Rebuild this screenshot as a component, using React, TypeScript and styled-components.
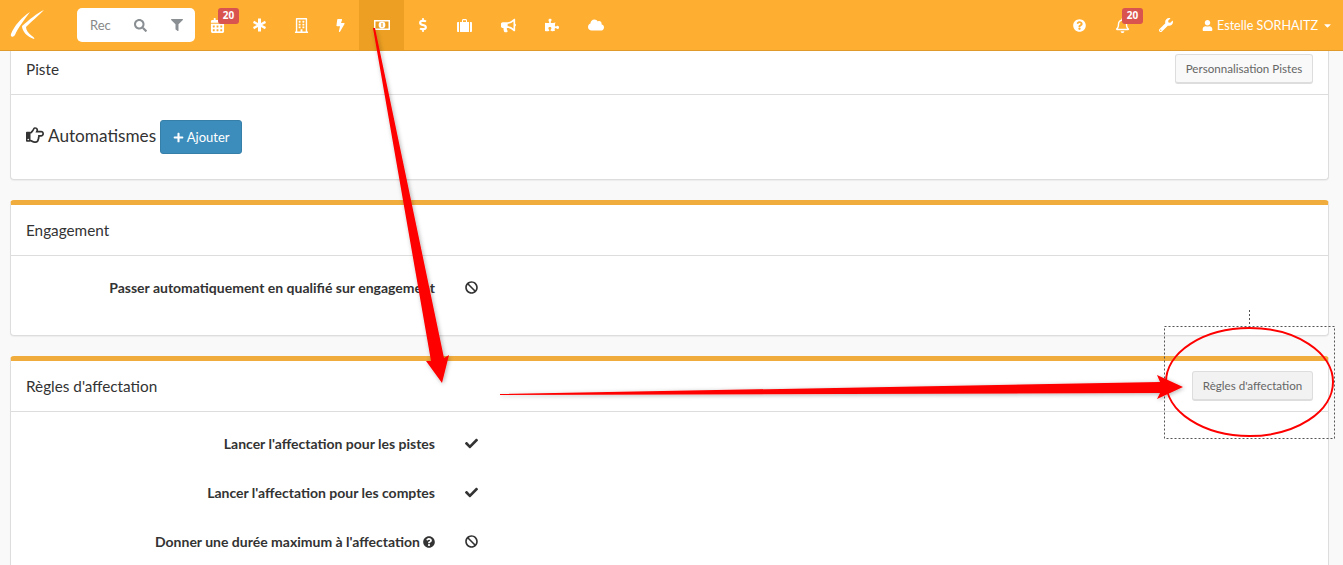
import { ReactNode } from 'react'
import styled, { createGlobalStyle } from 'styled-components'
import {
  FaBan,
  FaBolt,
  FaBullhorn,
  FaCalendarAlt,
  FaCaretDown,
  FaCheck,
  FaCloud,
  FaDollarSign,
  FaFilter,
  FaPlus,
  FaPuzzlePiece,
  FaQuestionCircle,
  FaRegBell,
  FaRegBuilding,
  FaRegHandPointRight,
  FaSearch,
  FaUser,
  FaWrench,
} from 'react-icons/fa'

const GlobalStyle = createGlobalStyle`
  html, body {
    margin: 0;
    height: 100%;
    overflow: hidden;
    background: #f9f9f9;
    color: #333;
    font-family: Lato, "Noto Sans", sans-serif;
    font-size: 14px;
  }
`

const Page = styled.div`
  position: relative;
  width: 1343px;
  height: 565px;
  overflow: hidden;
`

const Navbar = styled.nav`
  display: flex;
  align-items: stretch;
  height: 50px;
  background: #feae30;
  border-bottom: 1px solid #df9a2b;
  color: #fff;
`

const LogoLink = styled.a`
  display: flex;
  align-items: center;
  width: 77px;
  padding-left: 10px;
  box-sizing: border-box;
`

const SearchBox = styled.div`
  display: flex;
  align-items: center;
  align-self: center;
  width: 118px;
  height: 34px;
  margin-right: 1px;
  padding-left: 13px;
  box-sizing: border-box;
  background: #fff;
  border-radius: 5px;
  color: #888;
`

const SearchText = styled.span`
  width: 30px;
  font-size: 13px;
  overflow: hidden;
`

const SearchIcon = styled.span<{ $gap: number }>`
  display: flex;
  margin-left: ${({ $gap }) => $gap}px;
  color: #8a8f94;
`

const NavItem = styled.a<{ $width: number; $active?: boolean }>`
  position: relative;
  display: flex;
  align-items: center;
  justify-content: center;
  width: ${({ $width }) => $width}px;
  background: ${({ $active }) => ($active ? '#ec9f22' : 'transparent')};
`

const Badge = styled.span`
  position: absolute;
  top: 8px;
  left: 22px;
  width: 21px;
  height: 16px;
  font-family: "Noto Sans", sans-serif;
  font-size: 10px;
  font-weight: 700;
  line-height: 15px;
  text-align: center;
  color: #fff;
  background: #d9534f;
  border-radius: 3px;
`

const RightGroup = styled.div`
  display: flex;
  align-items: stretch;
  margin-left: auto;
`

const UserMenu = styled.a`
  display: flex;
  align-items: center;
  gap: 4px;
  width: 156px;
  padding-left: 15px;
  box-sizing: border-box;
  font-size: 12.6px;
`

const Content = styled.main`
  display: flex;
  flex-direction: column;
  gap: 20px;
  padding: 0 14px 0 10px;
`

const Panel = styled.section<{ $accent?: boolean }>`
  background: #fff;
  border: 1px solid #ddd;
  border-top: ${({ $accent }) => ($accent ? '5px solid #f0ad3e' : 'none')};
  border-radius: 4px;
  box-shadow: 0 1px 1px rgba(0, 0, 0, 0.05);
  ${({ $accent }) => !$accent && 'border-top-left-radius: 0; border-top-right-radius: 0;'}
`

const PanelHeader = styled.header`
  display: flex;
  align-items: center;
  justify-content: space-between;
  height: 50px;
  padding: 0 15px;
  border-bottom: 1px solid #ddd;
  font-size: 15.3px;
  color: #333;
`

const FirstHeader = styled(PanelHeader)`
  height: 36px;
  padding-bottom: 7px;
`

const Title = styled.span``

const HeaderButton = styled.button<{ $width: number; $pressed?: boolean }>`
  width: ${({ $width }) => $width}px;
  height: 30px;
  padding: 0;
  font-family: inherit;
  font-size: 11.6px;
  color: #666;
  background: ${({ $pressed }) => ($pressed ? '#f2f2f2' : '#f9f9f9')};
  border: 1px solid #ddd;
  border-bottom-width: 2px;
  border-radius: 3px;
`

const AutomationBody = styled.div`
  display: flex;
  align-items: center;
  height: 84px;
  padding: 0 15px;
  gap: 4px;
`

const AutomationTitle = styled.h3`
  display: flex;
  align-items: center;
  gap: 4px;
  margin: 0 0 4px;
  font-size: 17.2px;
  font-weight: 400;
  color: #333;
`

const PrimaryButton = styled.button`
  display: flex;
  align-items: center;
  justify-content: center;
  gap: 3px;
  width: 82px;
  height: 34px;
  padding: 0;
  font-family: inherit;
  font-size: 13px;
  color: #fff;
  background: #3c8dbc;
  border: 1px solid #367fa9;
  border-radius: 3px;
`

const RowList = styled.div<{ $bottom: number }>`
  padding: 7px 0 ${({ $bottom }) => $bottom}px;
`

const Row = styled.div`
  display: grid;
  grid-template-columns: 424px 1fr;
  column-gap: 30px;
  align-items: center;
  height: 49px;
`

const Label = styled.label`
  display: flex;
  align-items: center;
  justify-content: flex-end;
  gap: 3px;
  font-size: 14px;
  font-weight: 700;
  color: #333;
  white-space: nowrap;
`

const StateIcon = styled.span`
  display: flex;
  color: #333;
`

const Annotations = styled.svg`
  position: absolute;
  inset: 0;
  pointer-events: none;
`

function SettingRow({ label, on, help }: { label: string; on: boolean; help?: boolean }) {
  return (
    <Row>
      <Label>
        {label}
        {help && <FaQuestionCircle size={12} />}
      </Label>
      <StateIcon>{on ? <FaCheck size={13} /> : <FaBan size={13} />}</StateIcon>
    </Row>
  )
}

function Item({
  width,
  active,
  badge,
  children,
}: {
  width: number
  active?: boolean
  badge?: string
  children: ReactNode
}) {
  return (
    <NavItem $width={width} $active={active}>
      {children}
      {badge && <Badge>{badge}</Badge>}
    </NavItem>
  )
}

function Logo() {
  return (
    <svg width="38" height="32" viewBox="0 0 38 32" fill="#fff">
      <path d="M20 3 C12 8 4 17 1 25 C0 28 3 29 5 26 C8 19 14 11 20 3 Z" />
      <path d="M34 1 C27 4 19 11 12 17 C12 22 17 28 24 30 C25 30 24 28 22 27 C18 24 16 21 16 18 C22 12 29 6 34 1 Z" />
    </svg>
  )
}

function AsteriskIcon() {
  return (
    <svg width="13" height="14" viewBox="0 0 13 14" fill="#fff">
      <path d="M5 0.5H8V5L12 2.7L13 5L9.2 7L13 9L12 11.3L8 9V13.5H5V9L1 11.3L0 9L3.8 7L0 5L1 2.7L5 5Z" />
    </svg>
  )
}

function MoneyIcon() {
  return (
    <svg width="16" height="10" viewBox="0 0 16 10">
      <rect x="0.75" y="0.75" width="14.5" height="8.5" fill="#ec9f22" stroke="#fff" strokeWidth="1.5" />
      <circle cx="8" cy="5" r="3.4" fill="#fff" />
      <rect x="7.4" y="3" width="1.2" height="4" fill="#ec9f22" />
    </svg>
  )
}

function BriefcaseIcon() {
  return (
    <svg width="15" height="13" viewBox="0 0 15 13" fill="#fff">
      <path d="M5 3V1.5C5 .7 5.6 0 6.4 0H8.6C9.4 0 10 .7 10 1.5V3H9V1.2H6V3Z" />
      <path d="M1 3H2V13H1C.4 13 0 12.5 0 12V4C0 3.5 .4 3 1 3Z" />
      <rect x="3" y="3" width="9" height="10" />
      <path d="M13 3H14C14.6 3 15 3.5 15 4V12C15 12.5 14.6 13 14 13H13Z" />
    </svg>
  )
}

export default function App() {
  return (
    <Page>
      <GlobalStyle />
      <Navbar>
        <LogoLink>
          <Logo />
        </LogoLink>
        <SearchBox>
          <SearchText>Rec</SearchText>
          <SearchIcon $gap={14}>
            <FaSearch size={13} />
          </SearchIcon>
          <SearchIcon $gap={24}>
            <FaFilter size={12} />
          </SearchIcon>
        </SearchBox>
        <Item width={42} badge="20">
          <FaCalendarAlt size={15} />
        </Item>
        <Item width={43}>
          <AsteriskIcon />
        </Item>
        <Item width={41}>
          <FaRegBuilding size={15} />
        </Item>
        <Item width={37}>
          <FaBolt size={13} />
        </Item>
        <Item width={45} active>
          <MoneyIcon />
        </Item>
        <Item width={38}>
          <FaDollarSign size={14} />
        </Item>
        <Item width={44}>
          <BriefcaseIcon />
        </Item>
        <Item width={44}>
          <FaBullhorn size={15} />
        </Item>
        <Item width={43}>
          <FaPuzzlePiece size={14} />
        </Item>
        <Item width={46}>
          <FaCloud size={16} />
        </Item>
        <RightGroup>
          <Item width={42}>
            <FaQuestionCircle size={13} />
          </Item>
          <Item width={44} badge="20">
            <FaRegBell size={15} />
          </Item>
          <Item width={43}>
            <FaWrench size={14} />
          </Item>
          <UserMenu>
            <FaUser size={11} />
            Estelle SORHAITZ
            <FaCaretDown size={11} />
          </UserMenu>
        </RightGroup>
      </Navbar>

      <Content>
        <Panel>
          <FirstHeader>
            <Title>Piste</Title>
            <HeaderButton $width={138}>Personnalisation Pistes</HeaderButton>
          </FirstHeader>
          <AutomationBody>
            <AutomationTitle>
              <FaRegHandPointRight size={18} />
              Automatismes
            </AutomationTitle>
            <PrimaryButton>
              <FaPlus size={11} />
              Ajouter
            </PrimaryButton>
          </AutomationBody>
        </Panel>

        <Panel $accent>
          <PanelHeader>
            <Title>Engagement</Title>
          </PanelHeader>
          <RowList $bottom={23}>
            <SettingRow label="Passer automatiquement en qualifié sur engagement" on={false} />
          </RowList>
        </Panel>

        <Panel $accent>
          <PanelHeader>
            <Title>Règles d'affectation</Title>
            <HeaderButton $width={121} $pressed>
              Règles d'affectation
            </HeaderButton>
          </PanelHeader>
          <RowList $bottom={23}>
            <SettingRow label="Lancer l'affectation pour les pistes" on />
            <SettingRow label="Lancer l'affectation pour les comptes" on />
            <SettingRow label="Donner une durée maximum à l'affectation" on={false} help />
          </RowList>
        </Panel>
      </Content>

      <Annotations width="1343" height="565" viewBox="0 0 1343 565">
        <defs>
          <filter id="soft" x="-20%" y="-20%" width="140%" height="140%">
            <feDropShadow dx="1" dy="1" stdDeviation="2" floodColor="#000" floodOpacity="0.3" />
          </filter>
        </defs>
        <path d="M1249.5 310V326" stroke="#555" strokeDasharray="2 2" fill="none" />
        <rect x="1164.5" y="326.5" width="170" height="112" stroke="#555" strokeDasharray="2 2" fill="none" />
        <polygon
          points="373,28 375,28 444,358 449,355 442,383 426,361 431,361"
          fill="#fe0000"
          filter="url(#soft)"
        />
        <polygon
          points="500,394 1160,382 1157,375 1183,387 1157,399 1160,393 500,395"
          fill="#fe0000"
          filter="url(#soft)"
        />
        <ellipse cx="1249.5" cy="382" rx="83.5" ry="54" fill="none" stroke="#fe0000" strokeWidth="2" />
      </Annotations>
    </Page>
  )
}
